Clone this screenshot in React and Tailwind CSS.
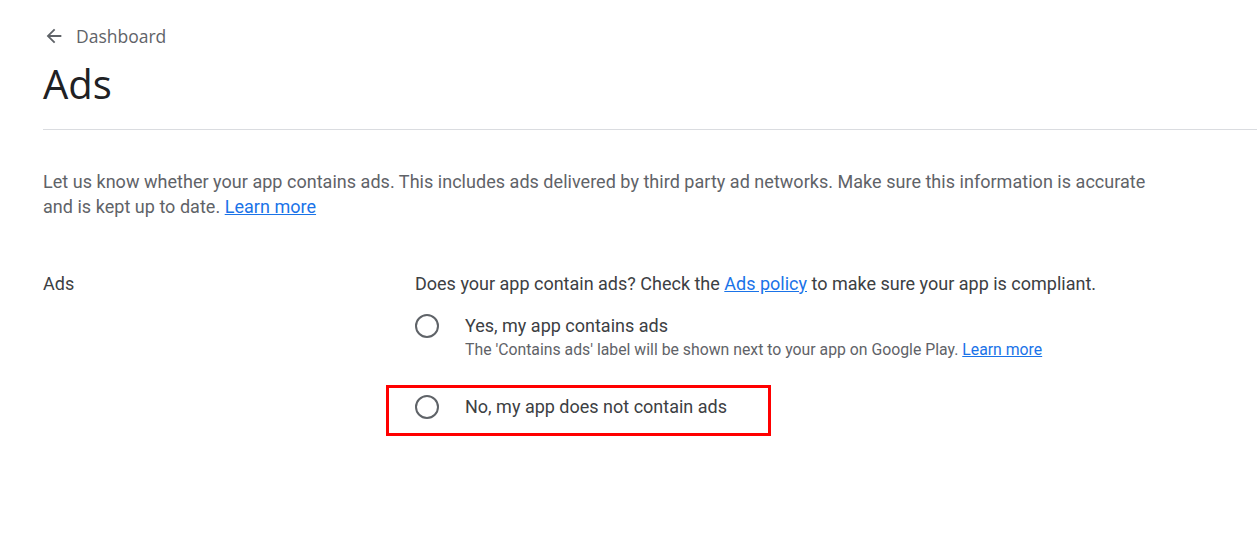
export default function App() {
  return (
    <div className="min-h-[553px] w-[1257px] bg-white font-['Roboto',sans-serif] overflow-hidden">
      <div className="pl-[43px] pt-[24px]">
        <div className="flex items-center h-6 text-[#5f6368]">
          <svg width="22" height="22" viewBox="0 0 24 24" fill="#5f6368">
            <path d="M20 11H7.83l5.59-5.59L12 4l-8 8 8 8 1.41-1.41L7.83 13H20v-2z" />
          </svg>
          <span className="ml-[11px] text-[17.5px] leading-6 font-['Open_Sans',sans-serif]">Dashboard</span>
        </div>
        <h1 className="mt-[14px] text-[40px] leading-[44px] text-[#202124] font-['Open_Sans',sans-serif]">Ads</h1>
        <div className="mt-[23px] border-t border-[#dadce0]" />
        <p className="mt-[39px] w-[1125px] text-[18px] leading-[25px] tracking-[0.03px] text-[#5f6368]">
          Let us know whether your app contains ads. This includes ads delivered by third party ad networks. Make sure this information is accurate and is kept up to date.{" "}
          <a className="text-[#1a73e8] underline">Learn more</a>
        </p>
        <div className="mt-[53px] flex">
          <div className="w-[372px] text-[18px] leading-6 text-[#3c4043]">Ads</div>
          <div className="flex flex-col">
            <div className="text-[18px] leading-6 text-[#3c4043]">
              Does your app contain ads? Check the <a className="text-[#1a73e8] underline">Ads policy</a> to make sure your app is compliant.
            </div>
            <div className="mt-[18px] flex items-start">
              <div className="w-6 h-6 rounded-full border-2 border-[#5f6368] shrink-0" />
              <div className="ml-[26px] flex flex-col">
                <span className="text-[18px] leading-6 text-[#3c4043]">Yes, my app contains ads</span>
                <span className="text-[15.8px] leading-6 text-[#5f6368]">
                  The 'Contains ads' label will be shown next to your app on Google Play.{" "}
                  <a className="text-[#1a73e8] underline">Learn more</a>
                </span>
              </div>
            </div>
            <div className="mt-[23px] -ml-[29px] w-[385px] h-[51px] border-[3px] border-[#ff0000] pl-[26px] pt-[7px] flex items-start">
              <div className="w-6 h-6 rounded-full border-2 border-[#5f6368] shrink-0" />
              <span className="ml-[26px] text-[18px] leading-6 text-[#3c4043]">No, my app does not contain ads</span>
            </div>
          </div>
        </div>
      </div>
    </div>
  );
}
